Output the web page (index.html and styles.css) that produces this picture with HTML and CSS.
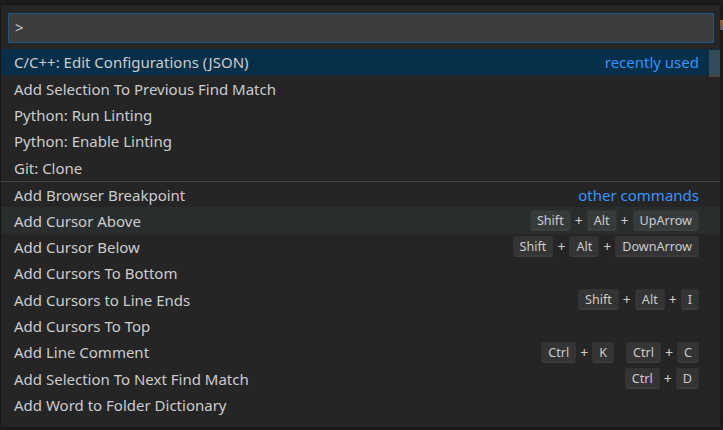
FILE: index.html
```html
<!DOCTYPE html>
<html>
<head>
<meta charset="utf-8">
<link rel="stylesheet" href="styles.css">
</head>
<body>
<div class="stage">
  <div class="gutter"></div>
  <div class="quick-input">
    <div class="input-area">
      <div class="input">&gt;</div>
    </div>
    <div class="list">
      <div class="row selected"><span class="label">C/C++: Edit Configurations (JSON)</span><span class="desc">recently used</span></div>
      <div class="row"><span class="label">Add Selection To Previous Find Match</span></div>
      <div class="row"><span class="label">Python: Run Linting</span></div>
      <div class="row"><span class="label">Python: Enable Linting</span></div>
      <div class="row"><span class="label">Git: Clone</span></div>
      <div class="row separator"><span class="label">Add Browser Breakpoint</span><span class="desc">other commands</span></div>
      <div class="row hover"><span class="label">Add Cursor Above</span><span class="keys"><span class="key">Shift</span><span class="plus">+</span><span class="key">Alt</span><span class="plus">+</span><span class="key">UpArrow</span></span></div>
      <div class="row"><span class="label">Add Cursor Below</span><span class="keys"><span class="key">Shift</span><span class="plus">+</span><span class="key">Alt</span><span class="plus">+</span><span class="key">DownArrow</span></span></div>
      <div class="row"><span class="label">Add Cursors To Bottom</span></div>
      <div class="row"><span class="label">Add Cursors to Line Ends</span><span class="keys"><span class="key">Shift</span><span class="plus">+</span><span class="key">Alt</span><span class="plus">+</span><span class="key">I</span></span></div>
      <div class="row"><span class="label">Add Cursors To Top</span></div>
      <div class="row"><span class="label">Add Line Comment</span><span class="keys chords"><span class="chord"><span class="key">Ctrl</span><span class="plus">+</span><span class="key">K</span></span><span class="chord"><span class="key">Ctrl</span><span class="plus">+</span><span class="key">C</span></span></span></div>
      <div class="row"><span class="label">Add Selection To Next Find Match</span><span class="keys"><span class="key">Ctrl</span><span class="plus">+</span><span class="key">D</span></span></div>
      <div class="row"><span class="label">Add Word to Folder Dictionary</span></div>
    </div>
    <div class="slider"></div>
  </div>
  <div class="edge">
    <div class="edge-icon"></div>
  </div>
</div>
</body>
</html>
```
FILE: styles.css
```css
html, body {
  margin: 0;
  padding: 0;
  background: #1e1e1e;
  width: 723px;
  height: 430px;
  overflow: hidden;
}

.stage {
  display: flex;
  align-items: flex-start;
  height: 430px;
}

.gutter {
  width: 1px;
  height: 430px;
  background: #1e1e1e;
}

.quick-input {
  position: relative;
  width: 719px;
  height: 422px;
  margin-top: 5px;
  background: #252526;
  box-shadow: 0 0 6px rgba(0,0,0,0.5);
  font-family: "Noto Sans", "Open Sans", sans-serif;
  color: #cccccc;
  box-sizing: border-box;
}

.input-area {
  padding: 8px 6px 6px 7px;
}

.input {
  height: 30px;
  box-sizing: border-box;
  border: 1px solid #17578a;
  background: #3c3c3c;
  color: #cccccc;
  font-size: 15px;
  line-height: 27px;
  padding-left: 6px;
}

.list {
  display: flex;
  flex-direction: column;
}

.row {
  height: 26.4px;
  display: flex;
  align-items: center;
  justify-content: space-between;
  padding: 0 21px 0 13px;
  font-size: 15px;
  box-sizing: border-box;
  white-space: nowrap;
}

.row.selected {
  background: #062f4a;
}

.row.hover {
  background: #2a2d2e;
}

.row.separator {
  border-top: 1px solid #454545;
}

.desc {
  color: #3794ff;
}

.keys, .chord {
  display: flex;
  align-items: center;
}

.keys.chords {
  gap: 12px;
}

.key {
  display: inline-block;
  height: 21px;
  line-height: 20px;
  box-sizing: border-box;
  padding: 0 6px;
  font-size: 12.6px;
  color: #cccccc;
  background: rgba(128,128,128,0.17);
  border: 1px solid rgba(51,51,51,0.6);
  border-bottom-color: rgba(68,68,68,0.6);
  border-radius: 3px;
  box-shadow: inset 0 -1px 0 rgba(68,68,68,0.4);
}

.plus {
  font-size: 14px;
  padding: 0 4px;
}

.slider {
  position: absolute;
  left: 708px;
  top: 45px;
  width: 11px;
  height: 27px;
  background: rgba(121,121,121,0.4);
}

.edge {
  width: 3px;
  height: 430px;
  background: #1e1e1e;
  display: flex;
  flex-direction: column;
  padding-top: 20px;
  box-sizing: border-box;
}

.edge-icon {
  width: 3px;
  height: 10px;
  background: linear-gradient(#b07a3a, #5a6f8a);
}
```
